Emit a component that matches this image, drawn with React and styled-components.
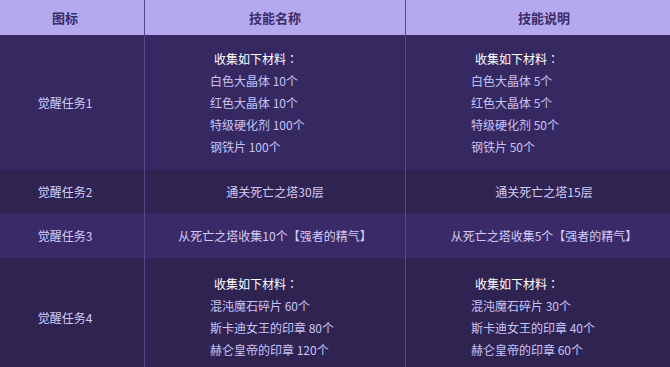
import React from "react";
import styled, { createGlobalStyle } from "styled-components";

const Global = createGlobalStyle`
  html, body { margin: 0; padding: 0; background: #2f2352; overflow: hidden; }
  body { font-family: "Noto Sans CJK SC", "Noto Sans", sans-serif; }
`;

const Table = styled.div`
  width: 670px;
  display: flex;
  flex-direction: column;
`;

const Row = styled.div`
  display: grid;
  grid-template-columns: 145px 261px 1fr;
  height: ${(p) => p.$h}px;
  background: ${(p) => p.$bg};
`;

const HeadCell = styled.div`
  box-sizing: border-box;
  display: flex;
  align-items: center;
  justify-content: center;
  border-right: 1px solid #56468a;
  font-size: 13px;
  font-weight: bold;
  color: #3b2c6a;
  &:first-child { padding-right: 14px; }
  &:last-child { border-right: none; padding-left: 12px; }
`;

const Cell = styled.div`
  box-sizing: border-box;
  display: flex;
  align-items: center;
  justify-content: ${(p) => (p.$list ? "flex-start" : "center")};
  padding-left: ${(p) => (p.$list ? "65px" : "0")};
  border-right: 1px solid #56488a;
  font-size: 12px;
  color: #d3cbf6;
  &:first-child { padding-right: 14px; }
  &:last-child { border-right: none; }
`;

const WideCell = styled(Cell)`
  &:last-child { padding-left: 12px; }
`;

const List = styled.div`
  display: flex;
  flex-direction: column;
  line-height: 22px;
  color: #c9c3f5;
`;

const ListTitle = styled.div`
  color: #ffffff;
  padding-left: 4px;
`;

const Colon = styled.span`
  font-family: "Noto Sans CJK TC", sans-serif;
`;

const rows = [
  {
    bg: "#362961",
    h: 135,
    name: "觉醒任务1",
    a: { list: ["白色大晶体 10个", "红色大晶体 10个", "特级硬化剂 100个", "钢铁片 100个"] },
    b: { list: ["白色大晶体 5个", "红色大晶体 5个", "特级硬化剂 50个", "钢铁片 50个"] },
  },
  { bg: "#2f2351", h: 43, name: "觉醒任务2", a: { text: "通关死亡之塔30层" }, b: { text: "通关死亡之塔15层" } },
  {
    bg: "#3a2b68",
    h: 45,
    name: "觉醒任务3",
    a: { text: "从死亡之塔收集10个【强者的精气】" },
    b: { text: "从死亡之塔收集5个【强者的精气】" },
  },
  {
    bg: "#2f2352",
    h: 118,
    name: "觉醒任务4",
    a: { list: ["混沌魔石碎片 60个", "斯卡迪女王的印章 80个", "赫仑皇帝的印章 120个"] },
    b: { list: ["混沌魔石碎片 30个", "斯卡迪女王的印章 40个", "赫仑皇帝的印章 60个"] },
  },
];

function Content({ c }) {
  if (c.list) {
    return (
      <Cell $list>
        <List>
          <ListTitle>
            收集如下材料<Colon>：</Colon>
          </ListTitle>
          {c.list.map((t) => (
            <div key={t}>{t}</div>
          ))}
        </List>
      </Cell>
    );
  }
  return <WideCell>{c.text}</WideCell>;
}

export default function App() {
  return (
    <>
      <Global />
      <Table>
        <Row $h={35} $bg="#b4a8ef">
          <HeadCell>图标</HeadCell>
          <HeadCell>技能名称</HeadCell>
          <HeadCell>技能说明</HeadCell>
        </Row>
        {rows.map((r) => (
          <Row key={r.name} $h={r.h} $bg={r.bg}>
            <Cell>{r.name}</Cell>
            <Content c={r.a} />
            <Content c={r.b} />
          </Row>
        ))}
      </Table>
    </>
  );
}
